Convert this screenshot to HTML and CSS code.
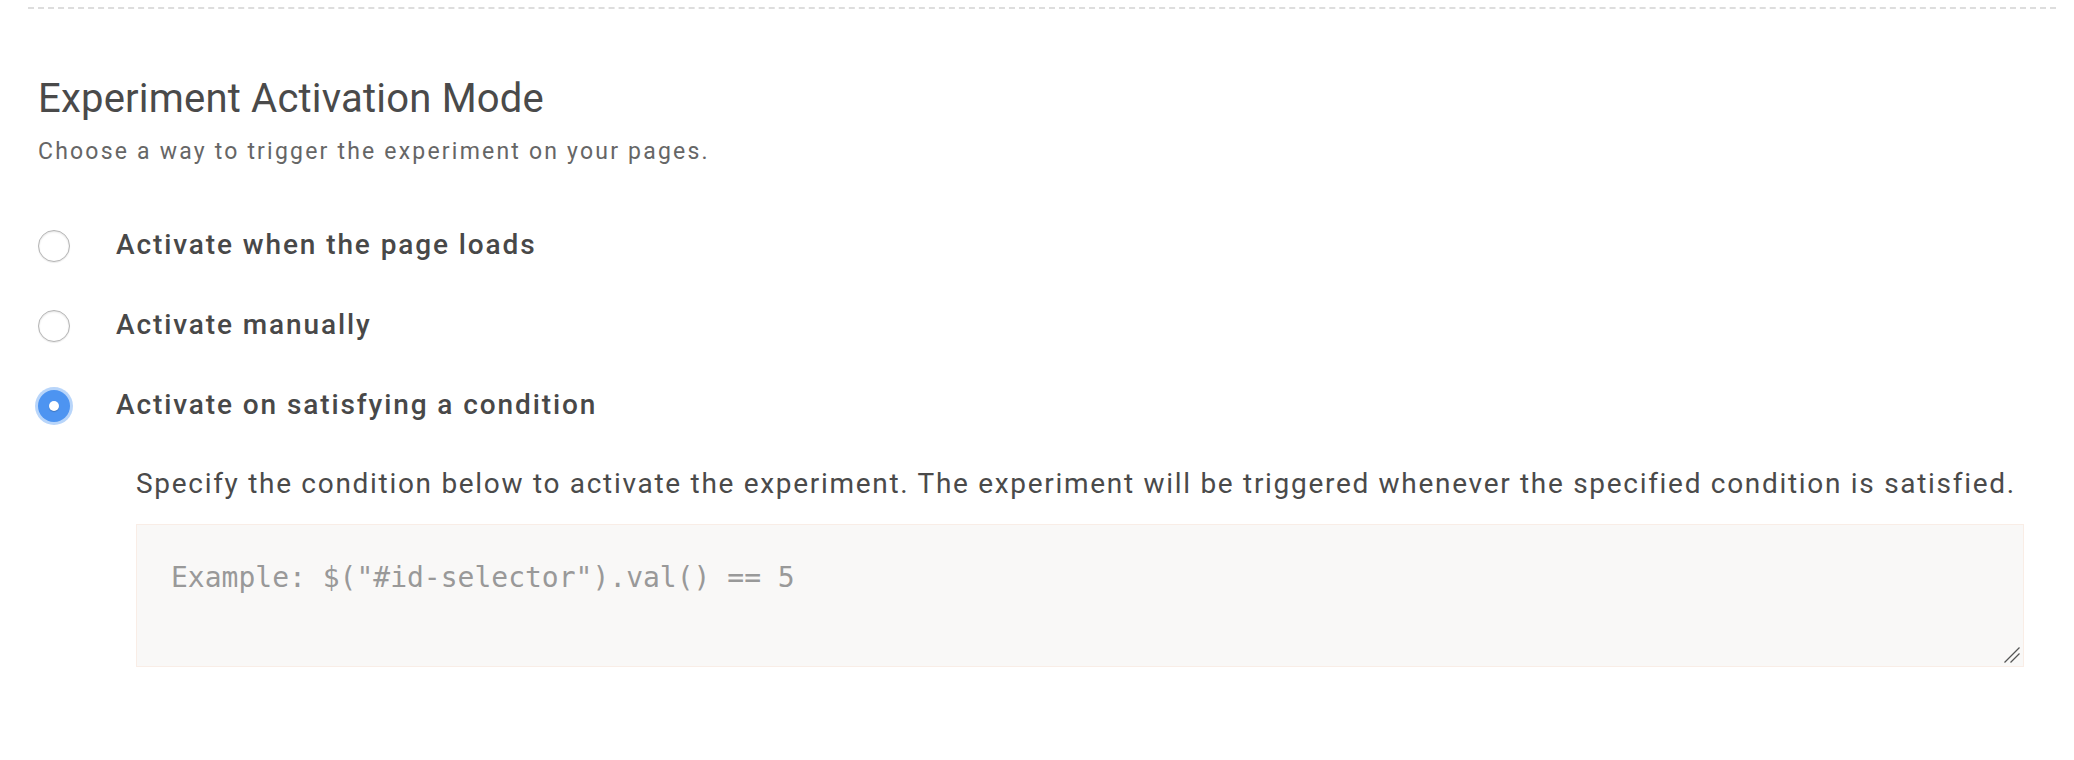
FILE: index.html
```html
<!DOCTYPE html>
<html lang="en">
<head>
<meta charset="utf-8">
<title>Experiment Activation Mode</title>
<link rel="stylesheet" href="styles.css">
</head>
<body>
<section class="section">
  <h2 class="title">Experiment Activation Mode</h2>
  <p class="subtitle">Choose a way to trigger the experiment on your pages.</p>
  <div class="options">
    <label class="option">
      <input class="radio" type="radio" name="mode">
      <span class="option-text">Activate when the page loads</span>
    </label>
    <label class="option">
      <input class="radio" type="radio" name="mode">
      <span class="option-text">Activate manually</span>
    </label>
    <label class="option">
      <input class="radio" type="radio" name="mode" checked>
      <span class="option-text">Activate on satisfying a condition</span>
    </label>
  </div>
  <div class="condition">
    <p class="condition-desc">Specify the condition below to activate the experiment. The experiment will be triggered whenever the specified condition is satisfied.</p>
    <div class="input-wrap">
      <textarea class="condition-input" placeholder="Example: $(&quot;#id-selector&quot;).val() == 5"></textarea>
      <svg class="resize-handle" width="18" height="18" viewBox="0 0 18 18" aria-hidden="true">
        <line x1="1.5" y1="16.5" x2="16.5" y2="1.5" />
        <line x1="7.5" y1="16.5" x2="16.5" y2="7.5" />
      </svg>
    </div>
  </div>
</section>
</body>
</html>
```
FILE: styles.css
```css
html, body {
  margin: 0;
  padding: 0;
  background: #ffffff;
}

body {
  font-family: Roboto, "Liberation Sans", Arial, sans-serif;
  color: #4a4a4a;
}

.section {
  margin: 7px 18px 0 28px;
  padding: 0 0 0 10px;
  border-top: 2px dashed #dddddd;
}

.title {
  margin: 66px 0 0 0;
  font-size: 40px;
  font-weight: 400;
  line-height: 47px;
  letter-spacing: 0.2px;
  color: #4a4a4a;
}

.subtitle {
  margin: 16px 0 0 0;
  font-size: 23px;
  line-height: 27px;
  letter-spacing: 2.2px;
  color: #666666;
}

.options {
  margin-top: 39px;
  display: flex;
  flex-direction: column;
}

.option {
  height: 80px;
  display: flex;
  align-items: center;
  gap: 46px;
  cursor: pointer;
}

.radio {
  appearance: none;
  -webkit-appearance: none;
  margin: 3px 0 0 0;
  width: 32px;
  height: 32px;
  flex: none;
  border-radius: 50%;
  border: 1px solid #b5b5b5;
  background: #ffffff;
  box-shadow: inset 0 1px 2px rgba(0, 0, 0, 0.12), 0 1px 1px rgba(0, 0, 0, 0.08);
  position: relative;
}

.radio:checked {
  border: none;
  background: #4d94f1;
  box-shadow: 0 0 0 3px #b8d5fa;
}

.radio:checked::after {
  content: "";
  position: absolute;
  left: 11px;
  top: 11px;
  width: 10px;
  height: 10px;
  border-radius: 50%;
  background: #ffffff;
  box-shadow: 0 1px 1px rgba(0, 0, 0, 0.2);
}

.option-text {
  font-size: 28px;
  font-weight: 500;
  line-height: 33px;
  letter-spacing: 1.9px;
  color: #484848;
}

.condition {
  margin: 23px 32px 0 98px;
}

.condition-desc {
  margin: 0;
  font-size: 28px;
  line-height: 33px;
  letter-spacing: 1.7px;
  color: #4a4a4a;
}

.input-wrap {
  position: relative;
  margin-top: 24px;
}

.condition-input {
  display: block;
  box-sizing: border-box;
  width: 100%;
  height: 143px;
  margin: 0;
  padding: 36px 34px;
  border: 1px solid #f9ede6;
  border-radius: 0;
  background: #f9f8f7;
  font-family: "DejaVu Sans Mono", "Liberation Mono", monospace;
  font-size: 28px;
  line-height: 33px;
  color: #4a4a4a;
  outline: none;
  resize: none;
}

.condition-input::placeholder {
  color: #999999;
}

.resize-handle {
  position: absolute;
  right: 3px;
  bottom: 3px;
  pointer-events: none;
}

.resize-handle line {
  stroke: #555555;
  stroke-width: 1.3;
}
```
